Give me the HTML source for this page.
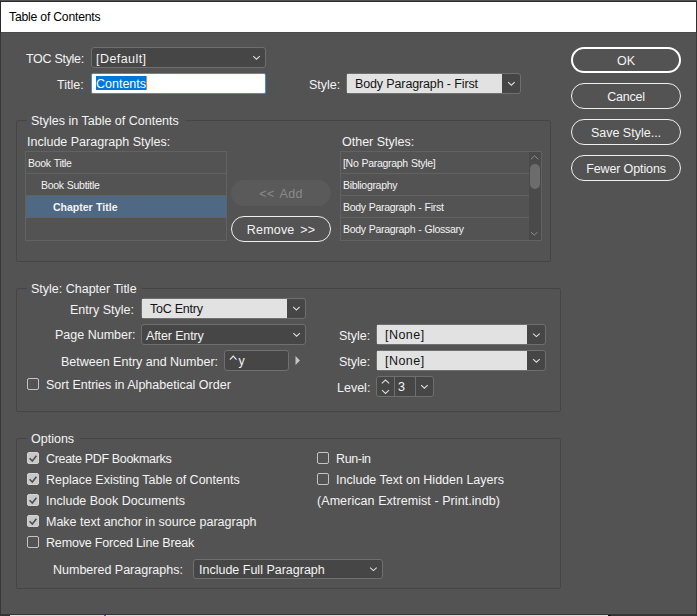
<!DOCTYPE html>
<html><head><meta charset="utf-8">
<style>
*{box-sizing:border-box;margin:0;padding:0}
html,body{width:697px;height:616px;overflow:hidden;background:#535353}
body{position:relative;font-family:"Liberation Sans",sans-serif;color:#f4f4f4}
.a{position:absolute}
.t{position:absolute;white-space:nowrap;font-size:12.5px;line-height:14px}
.s{position:absolute;white-space:nowrap;font-size:10.5px;line-height:12px;letter-spacing:-0.3px;word-spacing:0.5px}
.dd{position:absolute;background:#464646;border:1px solid #6f6f6f;border-radius:3px}
.lt{position:absolute;background:#e2e2e2}
.btn{position:absolute;border:1px solid #f0f0f0;border-radius:13px;width:110px;height:26px;text-align:center;font-size:12.5px;line-height:26px;white-space:nowrap}
.grp{position:absolute;border:1px solid #454545;border-radius:2px}
.leg{position:absolute;background:#535353;height:3px}
.cb{position:absolute;width:12px;height:12px;border:1px solid #c4c4c4;border-radius:2px}
.cbc{position:absolute;width:12px;height:12px;background:#c8c8c8;border:1px solid #d2d2d2;border-radius:2px}
.dk{color:#141414}
.ln{position:absolute;background:#626262}
</style></head><body>
<!-- window frame -->
<div class="a" style="left:0;top:1px;width:697px;height:1px;background:#2b2b2b"></div>
<div class="a" style="left:0;top:1px;width:1px;height:614px;background:#383838"></div>
<div class="a" style="left:696px;top:1px;width:1px;height:614px;background:#3a3a3a"></div>
<div class="a" style="left:0;top:1px;width:1px;height:32px;background:#2a2a2a"></div>
<div class="a" style="left:696px;top:1px;width:1px;height:32px;background:#2e2e2e"></div>
<div class="a" style="left:0;top:614px;width:697px;height:2px;background:#363636"></div>
<div class="a" style="left:10px;top:615px;width:598px;height:1px;background:#dedede"></div>
<div class="a" style="left:608px;top:615px;width:3px;height:1px;background:#111"></div>
<div class="a" style="left:104px;top:615px;width:2px;height:1px;background:#a23ee0"></div>
<div class="a" style="left:1px;top:2px;width:695px;height:30px;background:#fff"></div>
<div class="a" style="left:1px;top:32px;width:695px;height:1px;background:#4a4a4a"></div>
<div class="t" style="left:9px;top:10px;font-size:12.2px;letter-spacing:-0.2px;color:#000">Table of Contents</div>

<!-- top form -->
<div class="t" style="left:26px;top:52px;letter-spacing:-0.3px">TOC Style:</div>
<div class="dd" style="left:91px;top:47px;width:175px;height:21px"></div>
<div class="t" style="left:96px;top:52px;letter-spacing:0.44px">[Default]</div>

<div class="t" style="left:57px;top:78px">Title:</div>
<div class="a" style="left:91px;top:73px;width:175px;height:21px;background:#fff;border:1px solid #3d8ee6;border-radius:2px"></div>
<div class="a" style="left:96px;top:76px;width:50px;height:14px;background:#0078d7"></div>
<div class="a" style="left:146px;top:76px;width:1px;height:14px;background:#f5821f"></div>
<div class="t" style="left:96px;top:77px;color:#fff">Contents</div>

<div class="t" style="left:309px;top:78px">Style:</div>
<div class="dd" style="left:346px;top:73px;width:175px;height:21px"></div>
<div class="lt" style="left:347px;top:74px;width:155px;height:19px"></div>
<div class="t dk" style="left:355px;top:77px;letter-spacing:-0.13px">Body Paragraph - First</div>

<!-- right buttons -->
<div class="btn" style="left:571px;top:47px;border:2px solid #fff;line-height:24px">OK</div>
<div class="btn" style="left:571px;top:83px;letter-spacing:-0.25px">Cancel</div>
<div class="btn" style="left:571px;top:119px">Save Style...</div>
<div class="btn" style="left:571px;top:155px;letter-spacing:-0.12px">Fewer Options</div>

<!-- group 1 -->
<div class="grp" style="left:16px;top:120px;width:535px;height:142px"></div>
<div class="leg" style="left:27px;top:119px;width:158px"></div>
<div class="t" style="left:31px;top:114px">Styles in Table of Contents</div>
<div class="t" style="left:27px;top:135px">Include Paragraph Styles:</div>
<div class="t" style="left:342px;top:135px">Other Styles:</div>

<div class="a" style="left:25px;top:151px;width:202px;height:90px;border:1px solid #626262"></div>
<div class="ln" style="left:26px;top:173px;width:200px;height:1px"></div>
<div class="ln" style="left:26px;top:195px;width:200px;height:1px"></div>
<div class="a" style="left:26px;top:196px;width:200px;height:21px;background:#4f6883"></div>
<div class="ln" style="left:26px;top:217px;width:200px;height:1px"></div>
<div class="s" style="left:28px;top:157px">Book Title</div>
<div class="s" style="left:41px;top:179px">Book Subtitle</div>
<div class="s" style="left:53px;top:201px;font-weight:bold;letter-spacing:0">Chapter Title</div>

<div class="a" style="left:231px;top:180px;width:100px;height:26px;border-radius:13px;background:#5a5a5a"></div>
<div class="t" style="left:231px;top:187px;width:100px;text-align:center;color:#8a8a8a;word-spacing:2px;letter-spacing:0.3px">&lt;&lt; Add</div>
<div class="a" style="left:231px;top:216px;width:100px;height:26px;border-radius:13px;border:1px solid #f0f0f0"></div>
<div class="t" style="left:231px;top:223px;width:100px;text-align:center;word-spacing:2px;letter-spacing:0.2px">Remove &gt;&gt;</div>

<div class="a" style="left:340px;top:151px;width:202px;height:90px;border:1px solid #626262"></div>
<div class="ln" style="left:341px;top:173px;width:188px;height:1px"></div>
<div class="ln" style="left:341px;top:195px;width:188px;height:1px"></div>
<div class="ln" style="left:341px;top:217px;width:188px;height:1px"></div>
<div class="a" style="left:529px;top:152px;width:12px;height:88px;background:#4a4a4a"></div>
<div class="a" style="left:530px;top:164px;width:10px;height:25px;background:#6c6c6c;border-radius:5px"></div>
<div class="s" style="left:343px;top:157px">[No Paragraph Style]</div>
<div class="s" style="left:343px;top:179px">Bibliography</div>
<div class="s" style="left:343px;top:201px">Body Paragraph - First</div>
<div class="s" style="left:343px;top:223px">Body Paragraph - Glossary</div>

<!-- group 2 -->
<div class="grp" style="left:16px;top:288px;width:545px;height:124px"></div>
<div class="leg" style="left:27px;top:287px;width:115px"></div>
<div class="t" style="left:31px;top:282px">Style: Chapter Title</div>

<div class="t" style="left:70px;top:303px">Entry Style:</div>
<div class="dd" style="left:141px;top:298px;width:165px;height:21px"></div>
<div class="lt" style="left:142px;top:299px;width:145px;height:19px"></div>
<div class="t dk" style="left:150px;top:302px;letter-spacing:-0.24px">ToC Entry</div>

<div class="t" style="left:55px;top:328px">Page Number:</div>
<div class="dd" style="left:141px;top:324px;width:165px;height:21px"></div>
<div class="t" style="left:146px;top:329px;letter-spacing:-0.12px">After Entry</div>

<div class="t" style="left:61px;top:355px">Between Entry and Number:</div>
<div class="dd" style="left:224px;top:350px;width:65px;height:21px"></div>
<div class="t" style="left:238.4px;top:354px">y</div>

<div class="cb" style="left:27px;top:378px"></div>
<div class="t" style="left:46px;top:378px">Sort Entries in Alphabetical Order</div>

<div class="t" style="left:339px;top:329px">Style:</div>
<div class="dd" style="left:376px;top:324px;width:170px;height:21px"></div>
<div class="lt" style="left:377px;top:325px;width:150px;height:19px"></div>
<div class="t dk" style="left:385px;top:328px;letter-spacing:0.46px">[None]</div>

<div class="t" style="left:339px;top:355px">Style:</div>
<div class="dd" style="left:376px;top:350px;width:170px;height:21px"></div>
<div class="lt" style="left:377px;top:351px;width:150px;height:19px"></div>
<div class="t dk" style="left:385px;top:354px;letter-spacing:0.46px">[None]</div>

<div class="t" style="left:337px;top:381px">Level:</div>
<div class="dd" style="left:376px;top:376px;width:58px;height:21px"></div>
<div class="a" style="left:394px;top:377px;width:1px;height:19px;background:#6f6f6f"></div>
<div class="a" style="left:415px;top:377px;width:1px;height:19px;background:#6f6f6f"></div>
<div class="t" style="left:398px;top:380px">3</div>

<!-- group 3 -->
<div class="grp" style="left:16px;top:438px;width:545px;height:151px"></div>
<div class="leg" style="left:27px;top:437px;width:53px"></div>
<div class="t" style="left:31px;top:432px">Options</div>

<div class="cbc" style="left:27px;top:452px"></div>
<div class="t" style="left:46px;top:452px;letter-spacing:-0.33px">Create PDF Bookmarks</div>
<div class="cbc" style="left:27px;top:473px"></div>
<div class="t" style="left:46px;top:473px">Replace Existing Table of Contents</div>
<div class="cbc" style="left:27px;top:494px"></div>
<div class="t" style="left:46px;top:494px">Include Book Documents</div>
<div class="cbc" style="left:27px;top:515px"></div>
<div class="t" style="left:46px;top:515px">Make text anchor in source paragraph</div>
<div class="cb" style="left:27px;top:536px"></div>
<div class="t" style="left:46px;top:536px;letter-spacing:-0.17px">Remove Forced Line Break</div>

<div class="cb" style="left:317px;top:452px"></div>
<div class="t" style="left:336px;top:452px;letter-spacing:-0.36px">Run-in</div>
<div class="cb" style="left:317px;top:473px"></div>
<div class="t" style="left:336px;top:473px">Include Text on Hidden Layers</div>
<div class="t" style="left:317px;top:494px;letter-spacing:0.07px">(American Extremist - Print.indb)</div>

<div class="t" style="left:53px;top:563px">Numbered Paragraphs:</div>
<div class="dd" style="left:193px;top:559px;width:190px;height:20px"></div>
<div class="t" style="left:199px;top:563px">Include Full Paragraph</div>
<svg class="a" style="left:0;top:0;z-index:5" width="697" height="616"><polyline points="253.2,56.2 256.5,59.2 259.8,56.2" fill="none" stroke="#dedede" stroke-width="1.1"/><polyline points="508.09999999999997,82.2 511.4,85.2 514.6999999999999,82.2" fill="none" stroke="#dedede" stroke-width="1.1"/><polyline points="293.09999999999997,306.9 296.4,309.9 299.7,306.9" fill="none" stroke="#dedede" stroke-width="1.1"/><polyline points="293.3,333.2 296.6,336.2 299.90000000000003,333.2" fill="none" stroke="#dedede" stroke-width="1.1"/><polyline points="533.1,333.6 536.4,336.6 539.6999999999999,333.6" fill="none" stroke="#dedede" stroke-width="1.1"/><polyline points="533.1,359.2 536.4,362.2 539.6999999999999,359.2" fill="none" stroke="#dedede" stroke-width="1.1"/><polyline points="421.09999999999997,385.2 424.4,388.2 427.7,385.2" fill="none" stroke="#dedede" stroke-width="1.1"/><polyline points="370.09999999999997,567.6 373.4,570.6 376.7,567.6" fill="none" stroke="#dedede" stroke-width="1.1"/><polyline points="381.8,383.3 385.5,380.0 389.2,383.3" fill="none" stroke="#dedede" stroke-width="1.1"/><polyline points="382.0,390.09999999999997 385.5,393.4 389.0,390.09999999999997" fill="none" stroke="#dedede" stroke-width="1.1"/><polyline points="531.0,159.20000000000002 534.6,155.8 538.2,159.20000000000002" fill="none" stroke="#8c8c8c" stroke-width="1"/><polyline points="531.0,232.2 534.3,235.0 537.5999999999999,232.2" fill="none" stroke="#8c8c8c" stroke-width="1"/><polyline points="229.9,359.6 233.2,356.1 236.5,359.6" fill="none" stroke="#ececec" stroke-width="1.2"/><path d="M295.5 356 L300 360.5 L295.5 365 Z" fill="#c4c4c4"/><polyline points="29.6,458.3 32.3,461.0 36.4,455.8" fill="none" stroke="#4e4e4e" stroke-width="1.6"/><polyline points="29.6,479.3 32.3,482.0 36.4,476.8" fill="none" stroke="#4e4e4e" stroke-width="1.6"/><polyline points="29.6,500.3 32.3,503.0 36.4,497.8" fill="none" stroke="#4e4e4e" stroke-width="1.6"/><polyline points="29.6,521.3 32.3,524.0 36.4,518.8" fill="none" stroke="#4e4e4e" stroke-width="1.6"/></svg>
</body></html>
